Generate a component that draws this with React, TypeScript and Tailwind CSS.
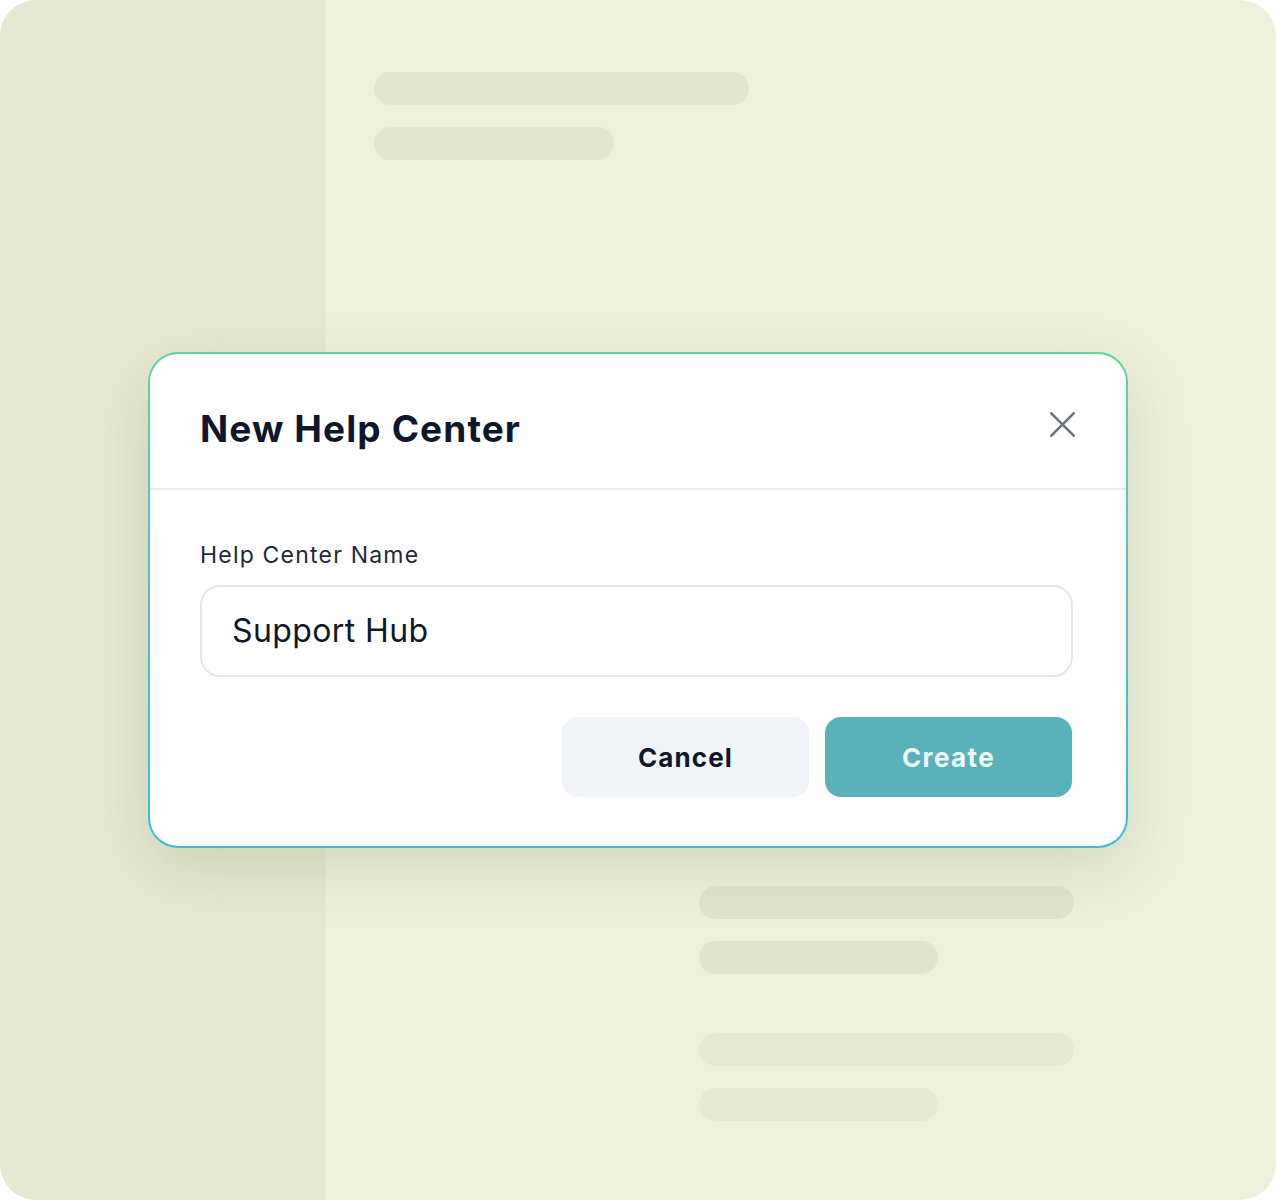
import React from "react";

export default function App() {
  return (
    <div className="w-[1276px] h-[1200px] bg-white" style={{ fontFamily: "Inter, 'Noto Sans', sans-serif" }}>
      <div className="relative w-full h-full rounded-[36px] overflow-hidden flex bg-[#edf1dc]">
        <div className="w-[326px] h-full bg-[#e5e9d2]" />
        <div className="flex-1 flex flex-col pt-[72px] pl-[48px]">
          <div className="w-[375px] h-[33px] rounded-full bg-[#e2e6d0]" />
          <div className="w-[240px] h-[33px] rounded-full bg-[#e2e6d0] mt-[22px]" />
          <div className="mt-[726px] ml-[325px] flex flex-col">
            <div className="w-[375px] h-[33px] rounded-full bg-[#e0e4cc]" />
            <div className="w-[239px] h-[33px] rounded-full bg-[#e0e4cc] mt-[22px]" />
            <div className="w-[375px] h-[33px] rounded-full bg-[#e5e9d3] mt-[59px]" />
            <div className="w-[239px] h-[33px] rounded-full bg-[#e5e9d3] mt-[22px]" />
          </div>
        </div>

        <div className="absolute left-[148px] top-[352px] w-[980px] h-[496px] rounded-[30px] p-[2px] bg-gradient-to-b from-[#5fd69a] via-[#4fc3c4] to-[#38bde0] shadow-[0_20px_60px_rgba(90,100,60,0.18)]">
          <div className="w-full h-full rounded-[28px] bg-white flex flex-col">
            <div className="h-[136px] flex items-center justify-between pl-[50px] pr-[51px] border-b-2 border-[#e8ebf0]">
              <h1 className="text-[37px] font-bold text-[#0f172a] tracking-[1.1px] mt-[16px] leading-[44px]">New Help Center</h1>
              <svg width="25" height="25" viewBox="0 0 25 25" className="mt-[6px]">
                <path d="M1.3 1.3 L23.7 23.7 M23.7 1.3 L1.3 23.7" stroke="#6b7280" strokeWidth="2.6" strokeLinecap="round" />
              </svg>
            </div>
            <div className="flex flex-col pl-[50px] pr-[53px] pt-[51px]">
              <label className="text-[23px] text-[#1e293b] leading-[28px] tracking-[1.2px]">Help Center Name</label>
              <div className="mt-[16px] h-[92px] rounded-[20px] border-2 border-[#e5e7eb] flex items-center pl-[30px]">
                <span className="text-[32px] text-[#0f172a] tracking-[0.4px]">Support Hub</span>
              </div>
              <div className="mt-[40px] flex justify-end gap-[16px] pr-[1px]">
                <button className="w-[247px] h-[80px] rounded-[16px] bg-[#f0f4f8] text-[26px] font-bold text-[#0f172a] tracking-[1.1px]">Cancel</button>
                <button className="w-[247px] h-[80px] rounded-[16px] bg-[#59b1b9] text-[26px] font-bold text-[#f0fdfa] tracking-[1.4px]">Create</button>
              </div>
            </div>
          </div>
        </div>
      </div>
    </div>
  );
}
